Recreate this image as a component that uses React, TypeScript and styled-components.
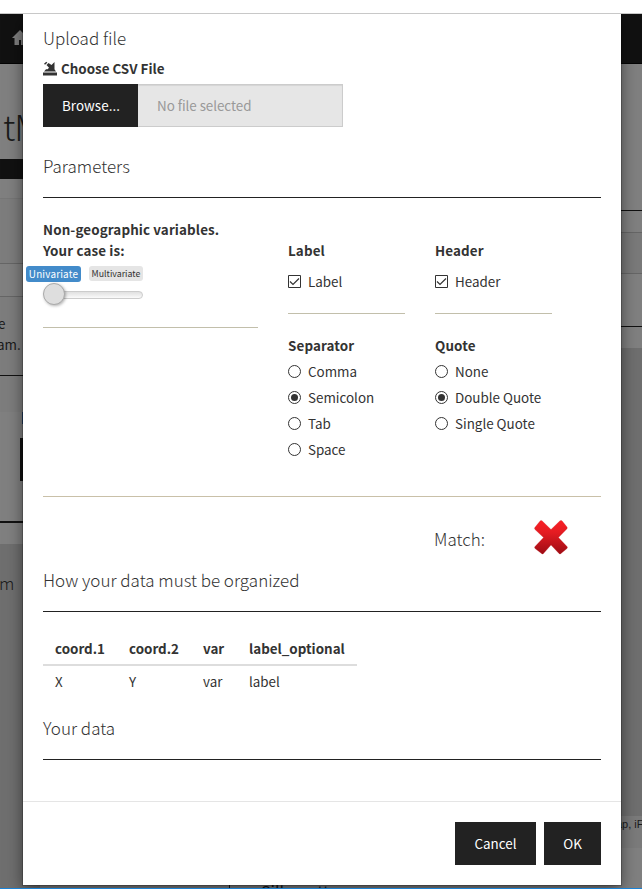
import React, { useState } from "react";
import styled, { createGlobalStyle, css } from "styled-components";

const GlobalStyle = createGlobalStyle`
  * { box-sizing: border-box; }
  body {
    margin: 0;
    background: #fff;
    color: #333;
    font-family: "Noto Sans CJK SC", "Noto Sans", sans-serif;
    font-size: 13.4px;
    line-height: 21px;
    overflow: hidden;
  }
`;

const Screen = styled.div`
  position: relative;
  width: 642px;
  height: 889px;
  padding-top: 13px;
  overflow: hidden;
`;

const Page = styled.div`
  height: 875px;
  border-top: 1px solid #c8c8c8;
  display: flex;
  justify-content: space-between;
  background: #808080;
  overflow: hidden;
`;

const Side = styled.div<{ $width: number }>`
  width: ${(p) => p.$width}px;
  display: flex;
  flex-direction: column;
  overflow: hidden;
`;

const Band = styled.div<{ $height: number; $color?: string; $line?: string }>`
  flex: none;
  height: ${(p) => p.$height}px;
  background: ${(p) => p.$color || "#808080"};
  ${(p) => p.$line && css`border-bottom: 1px solid ${p.$line};`}
  color: #1a1a1a;
  overflow: hidden;
  white-space: nowrap;
`;

const NavBand = styled(Band)`
  padding: 16px 0 0 12px;
`;

const TitleBand = styled(Band)`
  padding-left: 3px;
  font-size: 35px;
  font-weight: 300;
  line-height: 123px;
  letter-spacing: -1px;
`;

const ProseBand = styled(Band)`
  padding-top: 16px;
`;

const Prose = styled.div`
  display: flex;
  flex-direction: column;
  align-items: flex-start;
`;

const ProseEnd = styled.span<{ $shift: number }>`
  margin-left: ${(p) => p.$shift}px;
`;

const Tick = styled.div<{ $color: string; $left: number; $height: number }>`
  margin-left: ${(p) => p.$left}px;
  width: 20px;
  flex: none;
  height: ${(p) => p.$height}px;
  background: ${(p) => p.$color};
`;

const SideHeading = styled(Band)`
  padding-top: 28px;
  font-size: 17px;
  font-weight: 300;
  text-indent: -1px;
`;

const Attribution = styled(Band)`
  font: 11px/16px "Liberation Sans", sans-serif;
`;

const PlotArea = styled.div`
  flex: 1;
  display: flex;
  align-items: flex-end;
  padding-left: 189px;
`;

const PlotTitle = styled.div`
  height: 5px;
  padding-left: 31px;
  border-left: 1px solid #111;
  color: #111;
  font-size: 16px;
  line-height: 17px;
  overflow: hidden;
`;

const WindowEdge = styled.div`
  height: 1px;
  background: #1a82d6;
`;

const Dialog = styled.section`
  position: absolute;
  top: 14px;
  left: 23px;
  width: 598px;
  height: 871px;
  background: #fff;
  background-clip: padding-box;
  box-shadow: 0 0 0 1px rgba(0, 0, 0, 0.2), 0 5px 15px rgba(0, 0, 0, 0.5);
  clip-path: inset(0 -30px -3px -30px);
  display: flex;
  flex-direction: column;
`;

const Body = styled.div`
  height: 788px;
  padding: 13px 20px 0;
  border-bottom: 1px solid #e5e5e5;
  display: flex;
  flex-direction: column;
`;

const Heading = styled.h4`
  margin: 0;
  height: 22px;
  font-size: 17px;
  line-height: 22px;
  font-weight: 300;
  white-space: nowrap;
`;

const Rule = styled.hr<{ $color?: string }>`
  width: 100%;
  height: 1px;
  flex: none;
  border: 0;
  margin: 0;
  background: ${(p) => p.$color || "#222"};
`;

const Space = styled.div<{ $size: number }>`
  flex: none;
  height: ${(p) => p.$size}px;
`;

const FileLabel = styled.label`
  height: 21px;
  display: flex;
  align-items: center;
  gap: 4px;
  font-weight: 700;
`;

const FileInput = styled.div`
  width: 300px;
  height: 43px;
  display: flex;
  line-height: 43px;
`;

const Button = styled.button<{ $width: number }>`
  width: ${(p) => p.$width}px;
  height: 43px;
  padding: 0;
  border: 0;
  background: #222;
  color: #fff;
  font: inherit;
  line-height: 43px;
`;

const BrowseButton = styled(Button)`
  letter-spacing: 0.07px;
  text-indent: 1px;
`;

const FileName = styled.div`
  flex: 1;
  padding-left: 19px;
  border: 1px solid #ccc;
  border-left: 0;
  background: #e6e6e6;
  box-shadow: inset 0 1px 1px rgba(0, 0, 0, 0.075);
  color: #999;
  line-height: 41px;
  letter-spacing: -0.05px;
`;

const Parameters = styled.div`
  height: 298px;
  display: grid;
  grid-template-columns: 215px 117px 117px;
  column-gap: 30px;
`;

const Column = styled.div<{ $top: number }>`
  padding-top: ${(p) => p.$top}px;
`;

const Caption = styled.div`
  height: 21px;
  font-weight: 700;
  letter-spacing: 0.12px;
  white-space: nowrap;
`;

const Tags = styled.div`
  display: flex;
  align-items: flex-start;
  gap: 8px;
  height: 17px;
  margin: 5px 0 0 -17px;
`;

const Tag = styled.span<{ $active?: boolean }>`
  width: ${(p) => (p.$active ? 55 : 54)}px;
  height: ${(p) => (p.$active ? 16 : 15)}px;
  border-radius: 3px;
  text-align: center;
  font-size: ${(p) => (p.$active ? 9.9 : 8.8)}px;
  line-height: ${(p) => (p.$active ? 16 : 15)}px;
  letter-spacing: ${(p) => (p.$active ? 0.2 : 0)}px;
  background: ${(p) => (p.$active ? "#428bca" : "#e5e5e5")};
  color: ${(p) => (p.$active ? "#fff" : "#333")};
  white-space: nowrap;
`;

const Slider = styled.div`
  width: 100px;
  height: 22px;
  display: flex;
  align-items: center;
  margin-bottom: 22px;
`;

const Knob = styled.span`
  width: 22px;
  height: 22px;
  flex: none;
  border: 1px solid #aaa;
  border-radius: 50%;
  background: #dedede;
  box-shadow: 1px 1px 3px rgba(0, 0, 0, 0.3);
  z-index: 1;
`;

const Track = styled.span`
  flex: 1;
  height: 8px;
  margin: 2px 0 0 -8px;
  border: 1px solid #ccc;
  border-radius: 6px;
  background: linear-gradient(#e0e0e0, #fafafa);
`;

const Option = styled.label<{ $tall?: boolean }>`
  height: ${(p) => (p.$tall ? 41 : 26)}px;
  display: flex;
  align-items: center;
  gap: 7px;
  white-space: nowrap;
`;

const Glyph = styled.svg`
  flex: none;
  display: block;
`;

const Match = styled.div`
  height: 72px;
  display: flex;
  padding: 22px 32px 0 391px;
  justify-content: space-between;
`;

const MatchLabel = styled(Heading)`
  margin-top: 9px;
`;

const Table = styled.table`
  width: 314px;
  table-layout: fixed;
  border-collapse: separate;
  border-spacing: 0;
  text-align: left;
`;

const Cell = styled.td<{ $width: number }>`
  width: ${(p) => p.$width}px;
  height: 33px;
  padding: 0 0 2px 12px;
`;

const HeadCell = styled(Cell)`
  height: 35px;
  padding: 2px 0 0 12px;
  border-bottom: 2px solid #ddd;
`;

const Footer = styled.footer`
  padding: 20px 20px 0;
  display: flex;
  justify-content: flex-end;
  gap: 8px;
`;

function HomeIcon() {
  return (
    <Glyph width="16" height="16" viewBox="0 0 16 16" fill="#808080">
      <path d="M8 0 0 8h2.500v7H7v-5h2v5h4.500V8H16l-3-3V1h-2v2z" />
    </Glyph>
  );
}

function SaveIcon() {
  return (
    <Glyph width="14" height="15" viewBox="0 0 14 15" fill="#333">
      <path d="M0 11.500h14V14.500H0z M1 10.500 3 8.200h8.500l1.500 2.300z M11.500 1v8H4l2-2.200L3.500 4l2-2L8.500 4z" />
      <path d="M1.500 3.300 3.800 1.200" stroke="#333" strokeWidth="1.500" />
    </Glyph>
  );
}

function CheckBox() {
  return (
    <Glyph width="13" height="13" viewBox="0 0 13 13" fill="none" stroke="#333">
      <path d="M.5 .5h12v12H.5z" />
      <path d="m2 6.500 3 3 6-6" strokeWidth="1.200" />
    </Glyph>
  );
}

function RadioMark({ on }: { on: boolean }) {
  return (
    <Glyph width="13" height="13" viewBox="0 0 13 13">
      <circle cx="6.500" cy="6.500" r="6" fill="none" stroke="#333" />
      {on && <circle cx="6.500" cy="6.500" r="3.500" fill="#333" />}
    </Glyph>
  );
}

function CrossIcon() {
  return (
    <Glyph width="36" height="38" viewBox="0 0 36 38">
      <defs>
        <linearGradient id="cross" x1="0" y1="0" x2="0" y2="1">
          <stop offset="0" stopColor="#fa1f25" />
          <stop offset=".35" stopColor="#e51c22" />
          <stop offset="1" stopColor="#9d0c14" />
        </linearGradient>
      </defs>
      <path
        d="M9 1.800 18 10.500 27 1.800q1-.8 2 0l5 6.200q.8 1-.2 2L25.500 18.500l8.500 9q1 1 0 2l-6 5q-1 1-2 0l-8-8.500-7.500 8.500q-1 1-2 0L2 29.500q-1-1 0-2l8.500-9L2 10.500q-1-1-.2-2l5.500-6.700q.8-.8 1.700 0z"
        fill="url(#cross)"
        stroke="#c6282d"
        strokeOpacity=".5"
        strokeWidth=".5"
      />
    </Glyph>
  );
}

function RadioGroup({ title, options, initial }: { title: string; options: string[]; initial: string }) {
  const [value, setValue] = useState(initial);
  return (
    <>
      <Caption>{title}</Caption>
      <Space $size={2} />
      {options.map((o) => (
        <Option key={o} onClick={() => setValue(o)}>
          <RadioMark on={o === value} />
          {o}
        </Option>
      ))}
    </>
  );
}

const columns = [
  { name: "coord.1", value: "X", width: 74 },
  { name: "coord.2", value: "Y", width: 74 },
  { name: "var", value: "var", width: 46 },
  { name: "label_optional", value: "label", width: 120 },
];

export default function App() {
  return (
    <Screen>
      <GlobalStyle />
      <Page>
        <Side $width={40}>
          <NavBand $height={50} $color="#111" $line="#040404">
            <HomeIcon />
          </NavBand>
          <TitleBand $height={95}>tM</TitleBand>
          <Band $height={20} $color="#111" />
          <Band $height={20} $line="#777" />
          <Band $height={65} $color="#7d7d7d" $line="#666" />
          <Band $height={33} $line="#666" />
          <ProseBand $height={79} $color="#7d7d7d" $line="#111">
            <Prose>
              <ProseEnd $shift={-2}>e</ProseEnd>
              <ProseEnd $shift={-3}>am.</ProseEnd>
            </Prose>
          </ProseBand>
          <Band $height={36} $color="#7d7d7d" />
          <Tick $height={12} $left={22} $color="#233f63" />
          <Space $size={14} />
          <Tick $height={43} $left={20} $color="#111" />
          <Space $size={40} />
          <Band $height={2} $color="#111" />
          <Band $height={21} />
          <SideHeading $height={346} $color="#6f6f6f">m</SideHeading>
        </Side>
        <PlotArea>
          <PlotTitle>Silhouette</PlotTitle>
        </PlotArea>
        <Side $width={26}>
          <Band $height={50} $color="#111" $line="#040404" />
          <Band $height={147} $line="#111" />
          <Band $height={22} $line="#666" />
          <Band $height={41} $color="#7a7a7a" $line="#666" />
          <Band $height={53} $line="#111" />
          <Band $height={21} />
          <Band $height={468} $color="#6f6f6f" />
          <Attribution $height={32} $color="#7b7b7b">ap, iF</Attribution>
          <Band $height={41} />
        </Side>
      </Page>
      <WindowEdge />

      <Dialog>
        <Body>
          <Heading>Upload file</Heading>
          <Space $size={9} />
          <FileLabel>
            <SaveIcon />
            Choose CSV File
          </FileLabel>
          <Space $size={5} />
          <FileInput>
            <BrowseButton $width={95}>Browse...</BrowseButton>
            <FileName>No file selected</FileName>
          </FileInput>
          <Space $size={28} />
          <Heading>Parameters</Heading>
          <Space $size={20} />
          <Rule />
          <Parameters>
            <Column $top={21}>
              <Caption>Non-geographic variables.</Caption>
              <Caption>Your case is:</Caption>
              <Tags>
                <Tag $active>Univariate</Tag>
                <Tag>Multivariate</Tag>
              </Tags>
              <Slider>
                <Knob />
                <Track />
              </Slider>
              <Rule $color="#c2bfab" />
            </Column>
            <Column $top={42}>
              <Caption>Label</Caption>
              <Option $tall>
                <CheckBox />
                Label
              </Option>
              <Space $size={11} />
              <Rule $color="#c2bfab" />
              <Space $size={21} />
              <RadioGroup title="Separator" options={["Comma", "Semicolon", "Tab", "Space"]} initial="Semicolon" />
            </Column>
            <Column $top={42}>
              <Caption>Header</Caption>
              <Option $tall>
                <CheckBox />
                Header
              </Option>
              <Space $size={11} />
              <Rule $color="#c2bfab" />
              <Space $size={21} />
              <RadioGroup title="Quote" options={["None", "Double Quote", "Single Quote"]} initial="Double Quote" />
            </Column>
          </Parameters>
          <Rule $color="#c9c0a8" />
          <Match>
            <MatchLabel>Match:</MatchLabel>
            <CrossIcon />
          </Match>
          <Heading>How your data must be organized</Heading>
          <Space $size={20} />
          <Rule />
          <Space $size={19} />
          <Table>
            <thead>
              <tr>
                {columns.map((c) => (
                  <HeadCell as="th" key={c.name} $width={c.width}>{c.name}</HeadCell>
                ))}
              </tr>
            </thead>
            <tbody>
              <tr>
                {columns.map((c) => (
                  <Cell key={c.name} $width={c.width}>{c.value}</Cell>
                ))}
              </tr>
            </tbody>
          </Table>
          <Space $size={18} />
          <Heading>Your data</Heading>
          <Space $size={20} />
          <Rule />
        </Body>
        <Footer>
          <Button $width={81}>Cancel</Button>
          <Button $width={57}>OK</Button>
        </Footer>
      </Dialog>
    </Screen>
  );
}
